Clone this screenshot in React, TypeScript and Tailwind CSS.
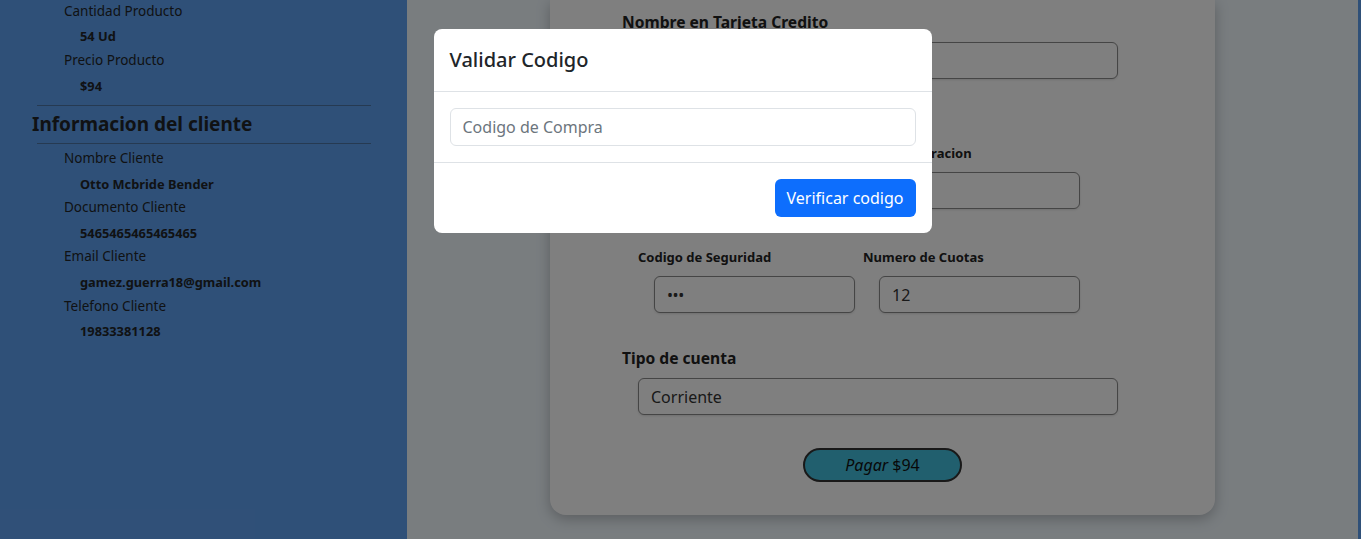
import React from 'react'

const font = { fontFamily: '"Noto Sans", "Open Sans", sans-serif' }

type Item = { label: string; value: string }

const producto: Item[] = [
  { label: 'Cantidad Producto', value: '54 Ud' },
  { label: 'Precio Producto', value: '$94' },
]

const cliente: Item[] = [
  { label: 'Nombre Cliente', value: 'Otto Mcbride Bender' },
  { label: 'Documento Cliente', value: '5465465465465465' },
  { label: 'Email Cliente', value: 'gamez.guerra18@gmail.com' },
  { label: 'Telefono Cliente', value: '19833381128' },
]

function InfoList({ items, className = '' }: { items: Item[]; className?: string }) {
  return (
    <div className={`flex flex-col ${className}`}>
      {items.map((it) => (
        <div key={it.label}>
          <p className="pl-16 text-[13.5px] leading-[24.7px] text-[#212529]">{it.label}</p>
          <p className="pl-20 pt-[2px] text-[12.8px] font-bold leading-[22.6px] text-[#212529]">{it.value}</p>
        </div>
      ))}
    </div>
  )
}

function Field({ value, className = '' }: { value: string; className?: string }) {
  return (
    <div
      className={`flex h-[37px] items-center rounded-md border border-[#8a8a8a] bg-white px-3 text-[16px] text-[#333] shadow-sm ${className}`}
    >
      {value}
    </div>
  )
}

export default function App() {
  return (
    <div className="relative flex h-[539px] overflow-hidden" style={font}>
      <aside className="w-[407px] shrink-0 bg-[#5fa0f0]">
        <div className="-mt-[1.3px]">
          <InfoList items={producto} />
          <div className="ml-[37px] mt-[7.5px] w-[334px] border-t border-[#333]/40" />
          <h2 className="ml-8 mt-[4px] text-[19px] font-bold leading-[28px] text-[#212529]">
            Informacion del cliente
          </h2>
          <div className="ml-[37px] mt-[5px] w-[334px] border-t border-[#333]/40" />
          <InfoList items={cliente} className="mt-[2px]" />
        </div>
      </aside>

      <main className="flex flex-1 justify-center bg-[#f2faff]">
        <div className="flex h-[515px] w-[665px] flex-col rounded-b-2xl bg-white pl-[72px] shadow-[0_4px_14px_rgba(0,0,0,0.25)]">
          <h3 className="mt-[10px] text-[15.6px] font-bold leading-[24px] text-[#222]">Nombre en Tarjeta Credito</h3>
          <Field value="" className="ml-4 mt-2 w-[480px]" />

          <h3 className="mt-[19px] text-[15.6px] font-bold leading-[24px] text-[#222]">Datos de la tarjeta</h3>

          <div className="ml-4 mt-[21px] grid w-[450px] grid-cols-2">
            <div>
              <p className="text-[13px] font-bold leading-[20px] text-[#222]">Numero Tarjeta</p>
              <Field value="" className="ml-4 mt-[9px] w-[201px]" />
            </div>
            <div>
              <p className="text-[13px] font-bold leading-[20px] text-[#222]">Fecha Expiracion</p>
              <Field value="" className="ml-4 mt-[9px] w-[201px]" />
            </div>
          </div>

          <div className="ml-4 mt-[38px] grid w-[450px] grid-cols-2">
            <div>
              <p className="text-[13px] font-bold leading-[20px] text-[#222]">Codigo de Seguridad</p>
              <Field value="•••" className="ml-4 mt-[9px] w-[201px] text-[13px] tracking-tight" />
            </div>
            <div>
              <p className="text-[13px] font-bold leading-[20px] text-[#222]">Numero de Cuotas</p>
              <Field value="12" className="ml-4 mt-[9px] w-[201px]" />
            </div>
          </div>

          <h3 className="mt-[33px] text-[15.6px] font-bold leading-[24px] text-[#222]">Tipo de cuenta</h3>
          <Field value="Corriente" className="ml-4 mt-2 w-[480px]" />

          <div className="-ml-[72px] mt-[33px] flex justify-center">
            <button
              type="button"
              className="h-[34px] w-[159px] rounded-full border-2 border-[#333] bg-[#42bedc] text-[16px] text-[#111]"
            >
              <i>Pagar</i> $94
            </button>
          </div>
        </div>
      </main>
      <div className="w-[3px] shrink-0 bg-[#5fa0f0]" />

      {/* modal */}
      <div className="absolute inset-0 flex items-start justify-center bg-black/50 pl-[4px]">
        <div className="mt-[29px] w-[498px] rounded-lg bg-white">
          <div className="flex h-[63px] items-center border-b border-[#dee2e6] px-4">
            <h5 className="text-[20px] font-medium text-[#212529]">Validar Codigo</h5>
          </div>
          <div className="border-b border-[#dee2e6] p-4">
            <input
              placeholder="Codigo de Compra"
              className="h-[38px] w-full rounded-md border border-[#dee2e6] px-3 text-[16px] text-[#212529] outline-none placeholder:text-[#6c757d]"
            />
          </div>
          <div className="flex justify-end px-4 py-4">
            <button
              type="button"
              className="h-[38px] rounded-md bg-[#0d6efd] px-3 text-[16px] text-white"
            >
              Verificar codigo
            </button>
          </div>
        </div>
      </div>
    </div>
  )
}
